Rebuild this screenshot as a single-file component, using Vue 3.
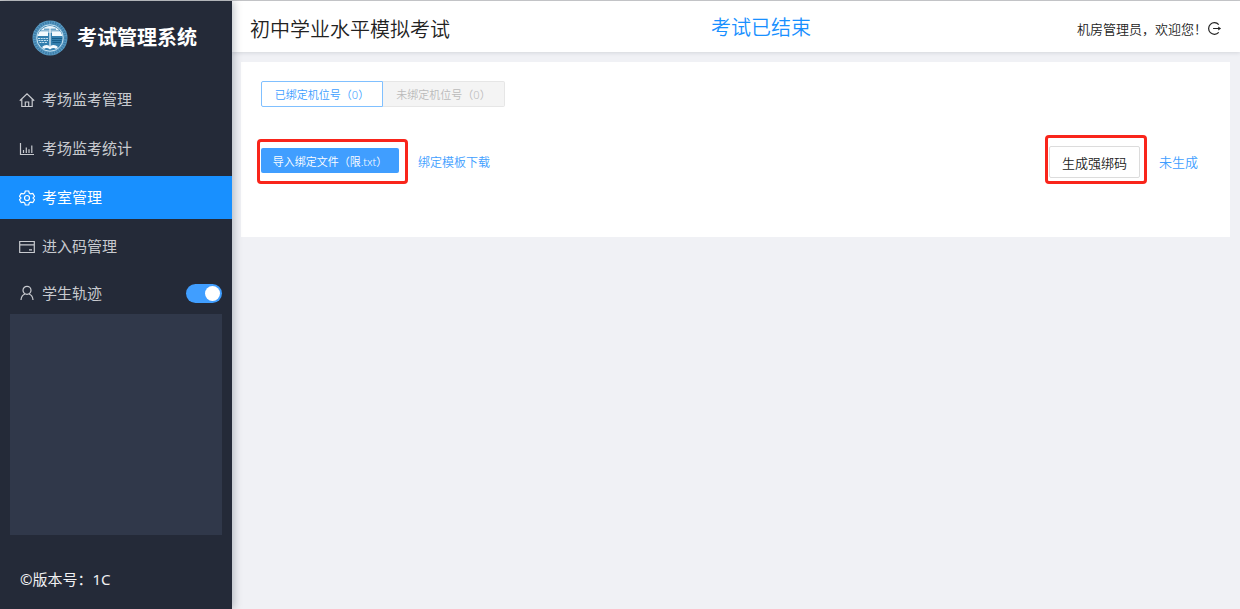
<script setup>
import { ref } from "vue";

const menus = [
  { key: "monitor", label: "考场监考管理" },
  { key: "stats", label: "考场监考统计" },
  { key: "room", label: "考室管理" },
  { key: "code", label: "进入码管理" },
];

const active = ref("room");
const trackOn = ref(true);
const boundCount = ref(0);
const unboundCount = ref(0);
</script>

<template>
  <div class="layout">
    <aside class="sidebar">
      <div class="brand">
        <svg class="logo" viewBox="0 0 36 36">
          <circle cx="18" cy="18" r="17.5" fill="#5b9cc4" />
          <circle cx="18" cy="18" r="15.5" fill="none" stroke="#3d7da9" stroke-width="2.5" stroke-dasharray="1.5 1" />
          <circle cx="18" cy="18" r="13.2" fill="#347fae" stroke="#d5e9f4" stroke-width="0.9" />
          <path d="M8.500 10.500q4-4.500 9.500-4.500t9.500 4.500z" fill="#e9f4fa" />
          <path d="M12 9.200h12" stroke="#347fae" stroke-width="1" />
          <path d="M5.500 16l2-4.500h8.500v4.500zM20 11.500h8.500l2 4.500H20z" fill="#f2f9fd" />
          <path d="M18 8v18M8 12h20" stroke="#f2f9fd" stroke-width="1.200" />
          <path d="M6 18.500h10M6.500 20.500h9.500M7.500 22.500h8" stroke="#c9e2f0" stroke-width="1" stroke-dasharray="2 0.7" />
          <path d="M20 18.500h10M20 20.500h9.500M20.500 22.500h8" stroke="#175d8a" stroke-width="1" />
          <path d="M10 27q4-3.500 8-.5q4-3 8 .5l-2 2q-2.500-2-6 .5q-3.500-2.500-6-.5z" fill="#f5fafd" />
        </svg>
        <h1 class="brand-name">考试管理系统</h1>
      </div>

      <nav class="menu">
        <a
          v-for="item in menus"
          :key="item.key"
          href="#"
          class="menu-item"
          :class="{ active: active === item.key }"
          @click.prevent="active = item.key"
        >
          <svg v-if="item.key === 'monitor'" class="icon" viewBox="0 0 16 16">
            <path d="M.8 8.800L8 1.800l7.200 7M2.800 7.200v7.300h10.400V7.200M6.300 14.500v-4.500h3.400v4.500" />
          </svg>
          <svg v-else-if="item.key === 'stats'" class="icon" viewBox="0 0 16 16">
            <path d="M1.500 2v11.500H15M4.500 12V9M7.300 12V6.500M10 12V8.200M12.800 12V4.500" />
          </svg>
          <svg v-else-if="item.key === 'room'" class="icon" viewBox="0 0 16 16">
            <path
              d="M6.300 1h3.400l.6 2.100 1.400.8 2.100-.5 1.700 2.900L14 7.900v.2l1.500 1.600-1.700 2.900-2.100-.5-1.400.8-.6 2.100H6.300l-.6-2.100-1.400-.8-2.100.5L.5 9.700 2 8.100v-.2L.5 6.300l1.700-2.900 2.100.5 1.400-.8z"
            />
            <circle cx="8" cy="8" r="2.500" />
          </svg>
          <svg v-else class="icon" viewBox="0 0 16 16">
            <path d="M.7 2.500h14.600v11H.7zM.7 5.800h14.600M10 10.800h3" />
          </svg>
          <span>{{ item.label }}</span>
        </a>
      </nav>

      <label class="track">
        <svg class="icon" viewBox="0 0 16 16">
          <circle cx="8" cy="5.300" r="4" />
          <path d="M2 15q.3-4.800 4-6M14 15q-.3-4.800-4-6" />
        </svg>
        <span>学生轨迹</span>
        <input v-model="trackOn" type="checkbox" class="switch" />
      </label>
      <div class="track-panel"></div>
      <footer class="version">©版本号：1C</footer>
    </aside>

    <div class="main">
      <header class="header">
        <h2 class="exam-name">初中学业水平模拟考试</h2>
        <div class="exam-status">考试已结束</div>
        <div class="user">
          <span>机房管理员，欢迎您！</span>
          <button type="button" class="logout" aria-label="退出">
            <svg viewBox="0 0 16 16">
              <path d="M12.500 3.800A6.200 6.200 0 1 0 12.500 12.200M6.500 8h7" />
              <path class="head" d="M12 5.800L15 8l-3 2.200z" />
            </svg>
          </button>
        </div>
      </header>

      <main class="card">
        <div class="tabs">
          <button type="button" class="tab on">已绑定机位号（{{ boundCount }}）</button>
          <button type="button" class="tab" disabled>未绑定机位号（{{ unboundCount }}）</button>
        </div>
        <div class="actions">
          <div class="mark mark-import">
            <button type="button" class="btn-import">导入绑定文件（限.txt）</button>
          </div>
          <a href="#" class="download">绑定模板下载</a>
          <div class="mark mark-code">
            <button type="button" class="btn-code">生成强绑码</button>
          </div>
          <span class="code-state">未生成</span>
        </div>
      </main>
    </div>
  </div>
</template>

<style>
body {
  background: #f0f1f5;
}
</style>

<style scoped>
.layout {
  display: flex;
  min-height: 100vh;
  box-sizing: border-box;
  border-top: 1px solid #c8c9cb;
  font-family: "Noto Sans", "Noto Sans CJK SC", sans-serif;
  font-weight: 350;
  background: #f0f1f5;
}

button {
  font-family: inherit;
  font-weight: inherit;
  box-sizing: border-box;
  padding: 0;
  white-space: nowrap;
  cursor: pointer;
}

a {
  text-decoration: none;
}

.sidebar {
  display: flex;
  flex-direction: column;
  flex: 0 0 232px;
  z-index: 1;
  background: #242a38;
  color: #c8cacf;
  font-size: 15px;
  font-weight: 400;
  box-shadow: 2px 0 8px rgba(0, 21, 41, 0.25);
}

.brand {
  display: flex;
  align-items: center;
  gap: 9px;
  height: 73px;
  padding-left: 32px;
  margin-bottom: 4px;
}

.logo {
  width: 36px;
  height: 36px;
}

.brand-name {
  margin: 0;
  color: #fff;
  font-size: 20px;
  line-height: 30px;
  font-weight: 700;
}

.menu {
  display: flex;
  flex-direction: column;
  gap: 6px;
}

.menu-item {
  display: flex;
  align-items: center;
  gap: 7px;
  height: 43px;
  padding-left: 19px;
  color: inherit;
}

.menu-item span,
.track span {
  padding-bottom: 2px;
}

.menu-item.active {
  background: #1890ff;
  color: #fff;
}

.icon {
  width: 16px;
  height: 16px;
  fill: none;
  stroke: currentColor;
  stroke-width: 1.2;
}

.track {
  display: flex;
  align-items: center;
  gap: 7px;
  height: 42px;
  margin-top: 4px;
  padding: 0 10px 0 19px;
}

.switch {
  appearance: none;
  display: flex;
  box-sizing: border-box;
  width: 36px;
  height: 19px;
  margin: 0 0 0 auto;
  padding: 2px;
  border-radius: 10px;
  background: #8c9099;
  cursor: pointer;
}

.switch::before {
  content: "";
  width: 15px;
  height: 15px;
  border-radius: 50%;
  background: #fff;
}

.switch:checked {
  justify-content: flex-end;
  background: #409eff;
}

.track-panel {
  flex: 1;
  margin: 0 10px;
  background: #30384a;
}

.version {
  padding: 32px 20px 18px;
  line-height: 24px;
  color: #f0f0f2;
}

.main {
  flex: 1;
  min-width: 0;
}

.header {
  display: grid;
  grid-template-columns: 1fr auto 1fr;
  align-items: center;
  height: 51px;
  padding: 0 18px;
  background: #fff;
  color: #222;
  box-shadow: 0 1px 4px rgba(0, 21, 41, 0.12);
}

.exam-name {
  margin: 0;
  font-size: 20px;
  font-weight: inherit;
  line-height: 30px;
  padding-top: 6px;
}

.exam-status {
  color: #1890ff;
  font-size: 20px;
  line-height: 30px;
  padding: 2px 0 0 50px;
}

.user {
  display: flex;
  justify-content: flex-end;
  align-items: center;
  padding-top: 4px;
  font-size: 13px;
}

.logout {
  display: flex;
  border: 0;
  background: none;
}

.logout svg {
  width: 15px;
  height: 15px;
  fill: none;
  stroke: #222;
  stroke-width: 1.3;
}

.logout .head {
  fill: #222;
  stroke: none;
}

.card {
  margin: 10px 10px 0 9px;
  padding: 19px 32px 53px 16px;
  background: #fff;
}

.tabs {
  display: flex;
  margin: 0 0 28px 4px;
}

.tab {
  width: 122px;
  height: 26px;
  border: 1px solid #e6e6e6;
  border-left: 0;
  border-radius: 0 2px 2px 0;
  background: #f4f4f4;
  color: #bbb;
  font-size: 11px;
}

.tab.on {
  border: 1px solid #80c0ff;
  border-radius: 2px 0 0 2px;
  background: #fff;
  color: #409eff;
}

.actions {
  display: flex;
  align-items: flex-end;
}

.mark {
  border: 3px solid #f9251b;
  border-radius: 4px;
}

.mark-import {
  padding: 6px 6px 8px 1px;
}

.btn-import {
  display: block;
  width: 138px;
  height: 25px;
  border: 0;
  border-radius: 2px;
  background: #409eff;
  color: #fff;
  font-size: 11px;
}

.download {
  margin-left: 10px;
  color: #409eff;
  font-size: 12px;
  line-height: 42px;
}

.mark-code {
  margin-left: auto;
  padding: 8px 4px 3px 1px;
}

.btn-code {
  display: block;
  width: 91px;
  height: 32px;
  border: 1px solid #dcdcdc;
  border-radius: 2px;
  background: #fff;
  color: #222;
  font-size: 13px;
}

.code-state {
  margin-left: 12px;
  color: #409eff;
  font-size: 13px;
  line-height: 44px;
}
</style>
